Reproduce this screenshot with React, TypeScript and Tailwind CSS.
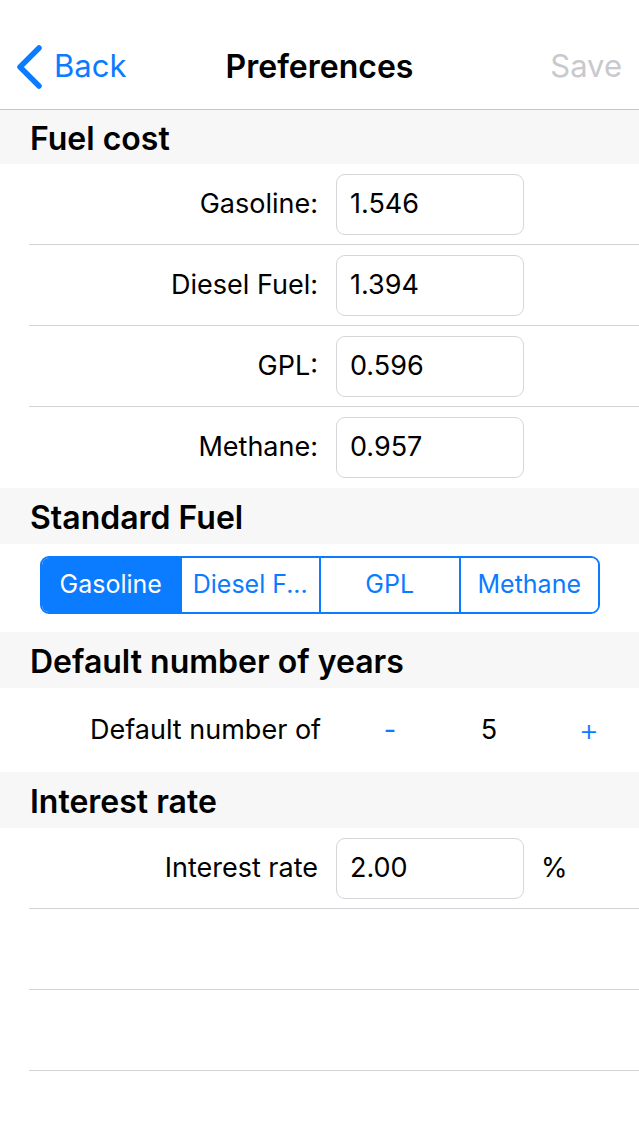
import { useState } from "react";

const font = { fontFamily: "Inter, 'Noto Sans', sans-serif" };

interface FieldRowProps {
  label: string;
  value: string;
  suffix?: string;
  divider?: boolean;
}

const FieldRow = (props: FieldRowProps) => {
  return (
    <div className="relative flex h-[81px] items-center bg-white">
      <div className="w-[318px] truncate text-right text-[27px] text-black">
        {props.label}
      </div>
      <div className="ml-[18px] flex h-[61px] w-[188px] items-center rounded-[9px] border border-[#d6d6da] px-[13px] text-[27px] text-black">
        {props.value}
      </div>
      {props.suffix && (
        <div className="ml-[17px] text-[27px] text-black">{props.suffix}</div>
      )}
      {props.divider && (
        <div className="absolute right-0 bottom-0 left-[29px] h-px bg-[#d3d3d7]" />
      )}
    </div>
  );
};

const SectionHeader = ({ title, h }: { title: string; h: string }) => (
  <div
    className={`flex items-center bg-[#f7f7f8] pt-[3px] pl-[30px] text-[32px] font-semibold text-black ${h}`}
  >
    {title}
  </div>
);

const fuels = ["Gasoline", "Diesel F...", "GPL", "Methane"];

const App = () => {
  const [selected, setSelected] = useState(0);
  const [years, setYears] = useState(5);

  return (
    <div className="flex min-h-[1136px] w-[639px] flex-col bg-white" style={font}>
      {/* nav bar */}
      <div className="relative flex h-[110px] items-center border-b border-[#c4c4c8] bg-white pt-[24px]">
        <button className="ml-[15px] flex items-center gap-[11px] text-[#0b7bff]">
          <svg width="28" height="44" viewBox="0 0 28 44" fill="none">
            <path
              d="M24 3 L5 22 L24 41"
              stroke="#0b7bff"
              strokeWidth="5.5"
              strokeLinecap="round"
              strokeLinejoin="round"
            />
          </svg>
          <span className="text-[31px]">Back</span>
        </button>
        <div className="absolute left-1/2 -translate-x-1/2 text-[32px] font-semibold text-black">
          Preferences
        </div>
        <div className="ml-auto mr-[17px] text-[31px] text-[#c9c9cd]">Save</div>
      </div>

      <SectionHeader title="Fuel cost" h="h-[54px]" />
      <FieldRow label="Gasoline:" value="1.546" divider />
      <FieldRow label="Diesel Fuel:" value="1.394" divider />
      <FieldRow label="GPL:" value="0.596" divider />
      <FieldRow label="Methane:" value="0.957" />

      <SectionHeader title="Standard Fuel" h="h-[56px]" />
      <div className="flex h-[88px] items-center bg-white pb-[6px] pl-[40px]">
        <div className="flex h-[58px] w-[560px] overflow-hidden rounded-[9px] border-2 border-[#0b7bff]">
          {fuels.map((f, i) => (
            <button
              key={f}
              onClick={() => setSelected(i)}
              className={`flex flex-1 items-center justify-center text-[25px] ${
                i > 0 ? "border-l-2 border-[#0b7bff]" : ""
              } ${selected === i ? "bg-[#0b7bff] text-white" : "bg-white text-[#0b7bff]"}`}
            >
              {f}
            </button>
          ))}
        </div>
      </div>

      <SectionHeader title="Default number of years" h="h-[56px]" />
      <div className="flex h-[84px] items-center bg-white">
        <div className="ml-[90px] w-[234px] whitespace-nowrap text-[27px] text-black">
          Default number of
        </div>
        <button
          onClick={() => setYears((y) => y - 1)}
          className="ml-[56px] w-[20px] text-[27px] text-[#0b7bff]"
        >
          -
        </button>
        <div className="ml-[75px] w-[28px] text-center text-[27px] text-black">
          {years}
        </div>
        <button
          onClick={() => setYears((y) => y + 1)}
          className="ml-[72px] w-[28px] text-[31px] font-light text-[#0b7bff]"
        >
          +
        </button>
      </div>

      <SectionHeader title="Interest rate" h="h-[56px]" />
      <FieldRow label="Interest rate" value="2.00" suffix="%" divider />
      <div className="relative h-[81px] bg-white">
        <div className="absolute right-0 bottom-0 left-[29px] h-px bg-[#d3d3d7]" />
      </div>
      <div className="relative h-[81px] bg-white">
        <div className="absolute right-0 bottom-0 left-[29px] h-px bg-[#d3d3d7]" />
      </div>
    </div>
  );
};

export default App;
